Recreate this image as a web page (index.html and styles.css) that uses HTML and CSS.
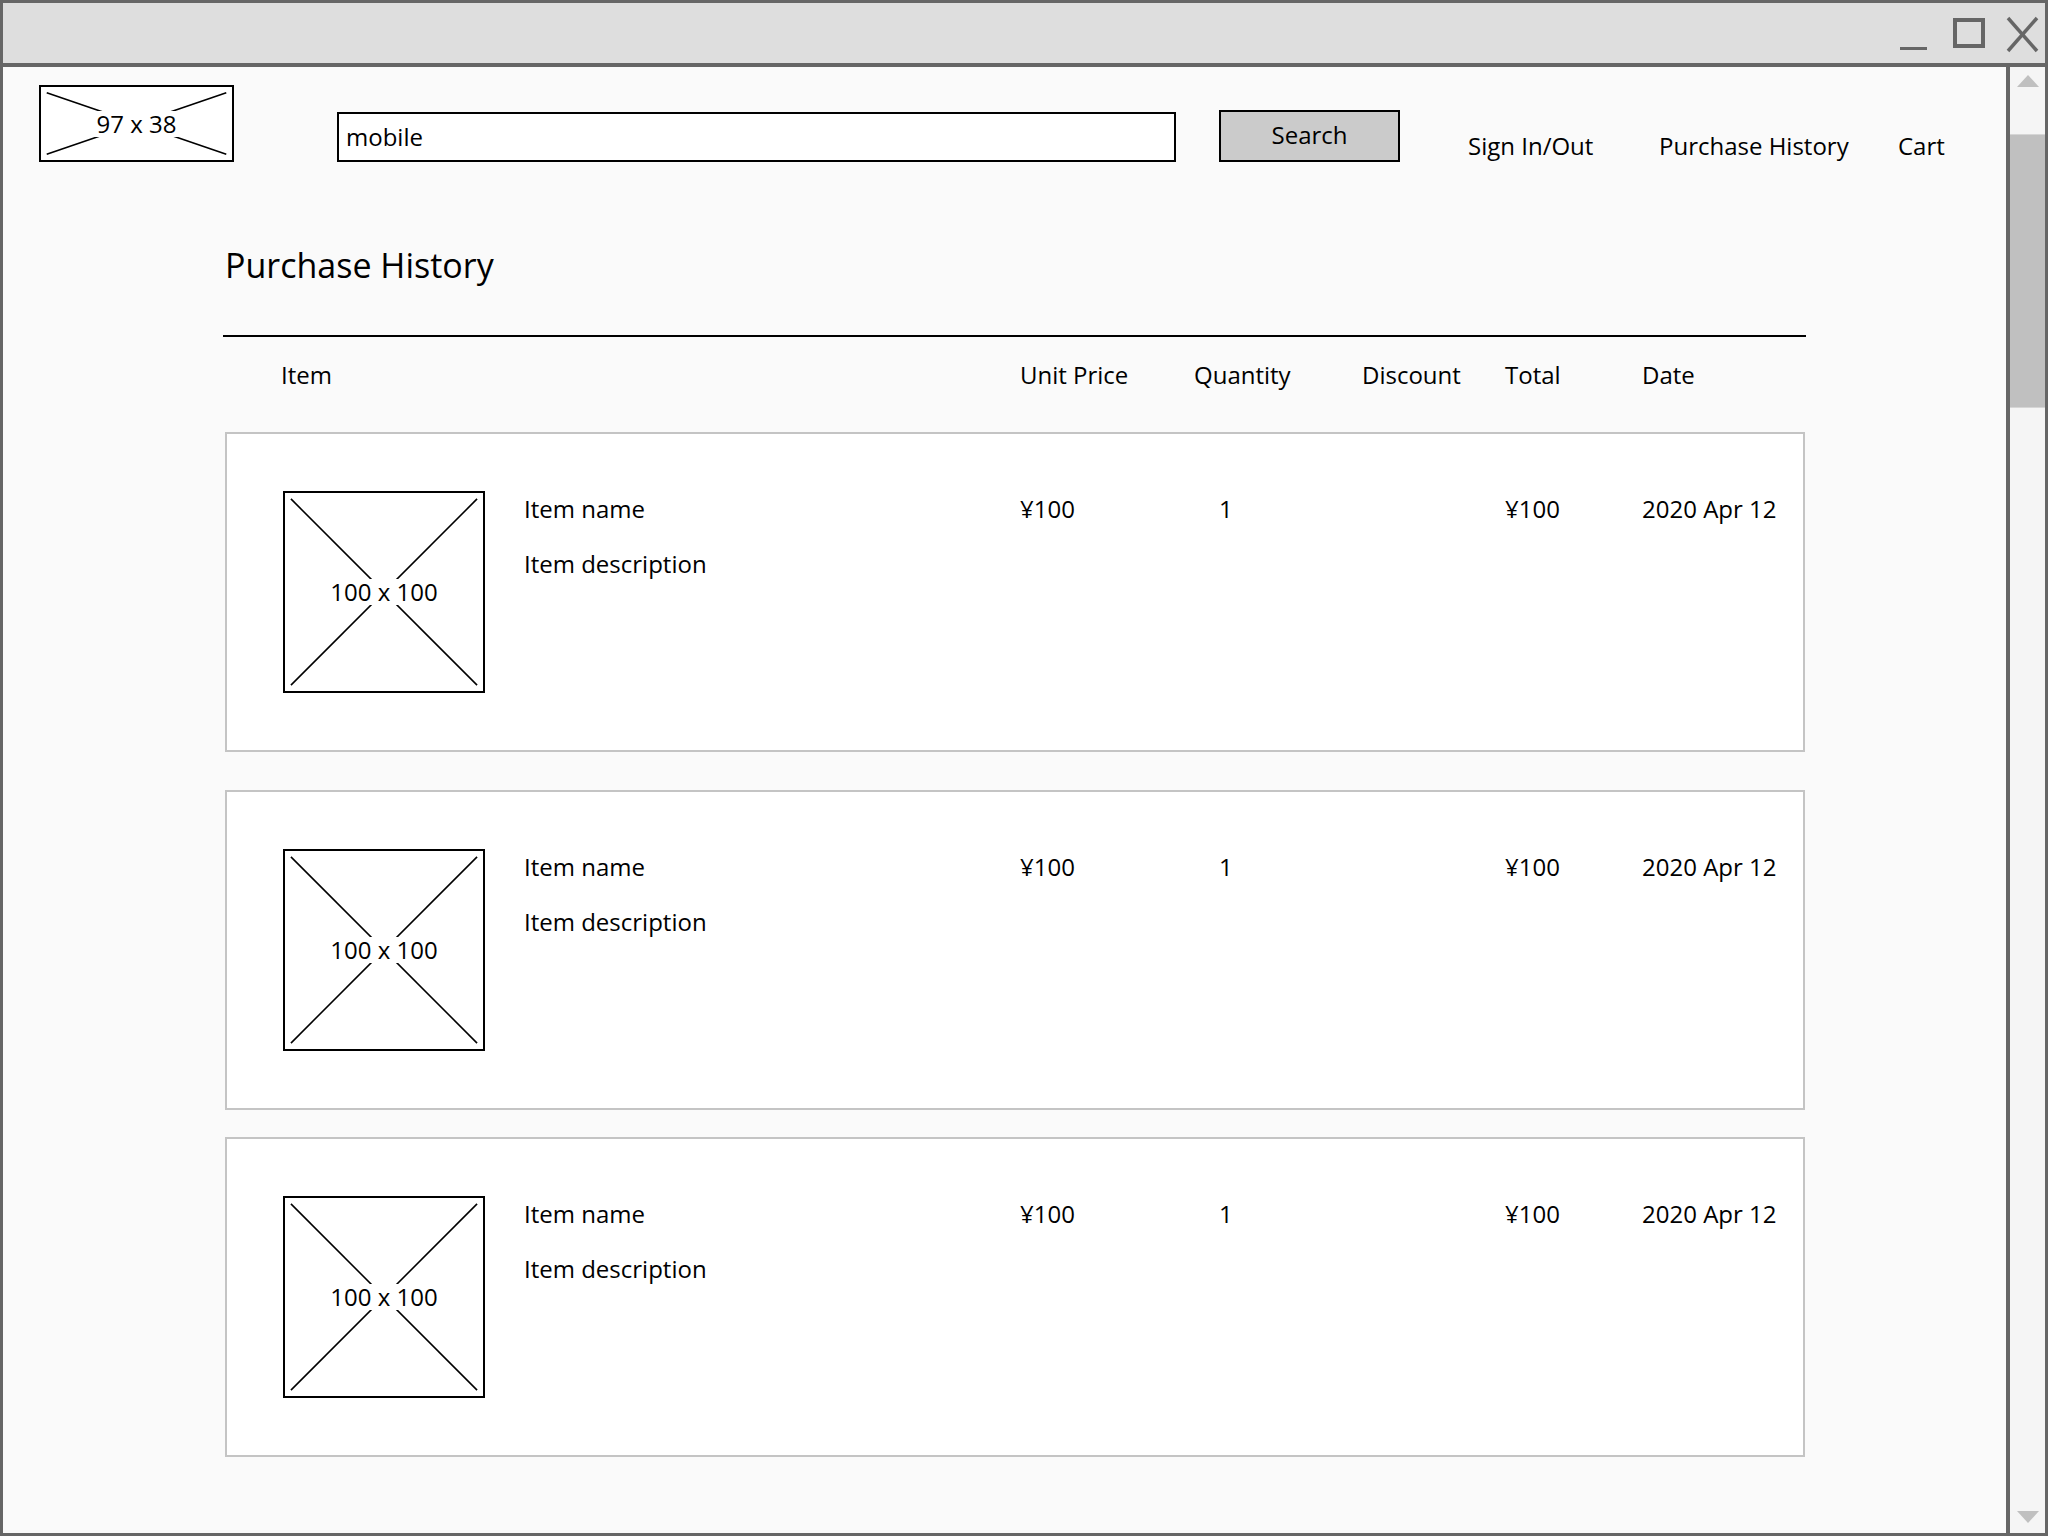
FILE: index.html
```html
<!DOCTYPE html>
<html lang="en">
<head>
<meta charset="utf-8">
<title>Purchase History</title>
<link rel="stylesheet" href="styles.css">
</head>
<body>
<div class="window">
  <div class="titlebar">
    <svg class="controls" width="143" height="50" viewBox="0 0 143 50">
      <line x1="3" y1="38.5" x2="30" y2="38.5" stroke="#666" stroke-width="3"/>
      <rect x="58" y="10" width="28" height="26" fill="none" stroke="#666" stroke-width="4"/>
      <line x1="111" y1="8" x2="140" y2="41" stroke="#666" stroke-width="3.5"/>
      <line x1="140" y1="8" x2="111" y2="41" stroke="#666" stroke-width="3.5"/>
    </svg>
  </div>
  <div class="frame">
    <div class="content">
      <header class="topbar">
        <div class="ph logo">
          <svg class="ph-lines" viewBox="0 0 100 100" preserveAspectRatio="none">
            <line x1="3" y1="8" x2="97" y2="92" vector-effect="non-scaling-stroke"/>
            <line x1="97" y1="8" x2="3" y2="92" vector-effect="non-scaling-stroke"/>
          </svg>
          <span class="ph-label">97 x 38</span>
        </div>
        <div class="search-input">mobile</div>
        <div class="search-btn">Search</div>
        <nav class="nav">
          <span class="nav-link">Sign In/Out</span>
          <span class="nav-link">Purchase History</span>
          <span class="nav-link">Cart</span>
        </nav>
      </header>

      <main class="history">
        <h1 class="title">Purchase History</h1>
        <div class="rule"></div>
        <div class="cols">
          <span>Item</span>
          <span>Unit Price</span>
          <span>Quantity</span>
          <span>Discount</span>
          <span>Total</span>
          <span>Date</span>
        </div>

        <div class="card card-1">
          <div class="ph thumb">
            <svg class="ph-lines" viewBox="0 0 100 100" preserveAspectRatio="none">
              <line x1="3" y1="3" x2="97" y2="97" vector-effect="non-scaling-stroke"/>
              <line x1="97" y1="3" x2="3" y2="97" vector-effect="non-scaling-stroke"/>
            </svg>
            <span class="ph-label">100 x 100</span>
          </div>
          <div class="cell info">
            <div>Item name</div>
            <div class="desc">Item description</div>
          </div>
          <div class="cell">¥100</div>
          <div class="cell">1</div>
          <div class="cell"></div>
          <div class="cell">¥100</div>
          <div class="cell">2020 Apr 12</div>
        </div>

        <div class="card card-2">
          <div class="ph thumb">
            <svg class="ph-lines" viewBox="0 0 100 100" preserveAspectRatio="none">
              <line x1="3" y1="3" x2="97" y2="97" vector-effect="non-scaling-stroke"/>
              <line x1="97" y1="3" x2="3" y2="97" vector-effect="non-scaling-stroke"/>
            </svg>
            <span class="ph-label">100 x 100</span>
          </div>
          <div class="cell info">
            <div>Item name</div>
            <div class="desc">Item description</div>
          </div>
          <div class="cell">¥100</div>
          <div class="cell">1</div>
          <div class="cell"></div>
          <div class="cell">¥100</div>
          <div class="cell">2020 Apr 12</div>
        </div>

        <div class="card card-3">
          <div class="ph thumb">
            <svg class="ph-lines" viewBox="0 0 100 100" preserveAspectRatio="none">
              <line x1="3" y1="3" x2="97" y2="97" vector-effect="non-scaling-stroke"/>
              <line x1="97" y1="3" x2="3" y2="97" vector-effect="non-scaling-stroke"/>
            </svg>
            <span class="ph-label">100 x 100</span>
          </div>
          <div class="cell info">
            <div>Item name</div>
            <div class="desc">Item description</div>
          </div>
          <div class="cell">¥100</div>
          <div class="cell">1</div>
          <div class="cell"></div>
          <div class="cell">¥100</div>
          <div class="cell">2020 Apr 12</div>
        </div>
      </main>
    </div>

    <div class="scrollbar">
      <div class="arrow-up"></div>
      <div class="thumb-bar"></div>
      <div class="arrow-down"></div>
    </div>
  </div>
</div>
</body>
</html>
```

FILE: styles.css
```css
* { box-sizing: border-box; }

html, body {
  margin: 0;
  padding: 0;
}

body {
  background: #fafafa;
  font-family: "Open Sans", "Liberation Sans", sans-serif;
  font-size: 24px;
  line-height: 28px;
  color: #000;
}

.window {
  width: 2048px;
  height: 1536px;
  border: 3px solid #666;
  display: flex;
  flex-direction: column;
  background: #fafafa;
  overflow: hidden;
}

.titlebar {
  height: 64px;
  flex: 0 0 64px;
  background: #dedede;
  border-bottom: 4px solid #666;
  display: flex;
  justify-content: flex-end;
  align-items: flex-start;
  padding-top: 7px;
  padding-right: 5px;
}

.controls { display: block; }

.frame {
  flex: 1;
  display: flex;
  min-height: 0;
}

.content {
  flex: 1;
  min-width: 0;
}

/* top bar */
.topbar {
  display: flex;
  align-items: flex-start;
}

.ph {
  position: relative;
  background: #fff;
  border: 2px solid #000;
  display: flex;
  align-items: center;
  justify-content: center;
}

.ph-lines {
  position: absolute;
  left: 0;
  top: 0;
  width: 100%;
  height: 100%;
}

.ph-lines line {
  stroke: #000;
  stroke-width: 1.6;
}

.ph-label {
  position: relative;
  background: #fff;
  padding: 0 5px;
  line-height: 26px;
}

.logo {
  width: 195px;
  height: 77px;
  margin: 18px 0 0 36px;
}

.search-input {
  width: 839px;
  height: 50px;
  margin: 45px 0 0 103px;
  border: 2px solid #000;
  background: #fff;
  padding: 0 7px;
  display: flex;
  align-items: center;
}

.search-btn {
  width: 181px;
  height: 52px;
  margin: 43px 0 0 43px;
  border: 2px solid #000;
  background: #cbcbcb;
  display: flex;
  align-items: center;
  justify-content: center;
  padding-bottom: 2px;
}

.nav {
  margin: 65px 0 0 68px;
  display: grid;
  grid-template-columns: 191px 239px auto;
}

/* main */
.history {
  margin-left: 220px;
  width: 1583px;
}

.title {
  margin: 83px 0 0 2px;
  font-size: 34px;
  line-height: 40px;
  font-weight: normal;
}

.rule {
  margin-top: 50px;
  height: 2px;
  background: #000;
}

.cols {
  margin-top: 24px;
  padding-left: 58px;
  display: grid;
  grid-template-columns: 739px 174px 168px 143px 137px 1fr;
}

.card {
  margin-left: 2px;
  width: 1580px;
  height: 320px;
  background: #fff;
  border: 2px solid #c4c4c4;
  padding: 57px 0 0 56px;
  display: grid;
  grid-template-columns: 241px 496px 199px 143px 143px 137px 1fr;
  align-items: start;
}

.card-1 { margin-top: 43px; }
.card-2 { margin-top: 38px; }
.card-3 { margin-top: 27px; }

.thumb {
  width: 202px;
  height: 202px;
}

.cell {
  margin-top: 4px;
}

.desc {
  margin-top: 27px;
}

/* scrollbar */
.scrollbar {
  width: 39px;
  flex: 0 0 39px;
  border-left: 4px solid #666;
  background: #f5f5f5;
  display: flex;
  flex-direction: column;
  align-items: center;
}

.arrow-up {
  width: 0;
  height: 0;
  margin-top: 8px;
  border-left: 11px solid transparent;
  border-right: 11px solid transparent;
  border-bottom: 12px solid #c0c0c0;
}

.thumb-bar {
  align-self: stretch;
  margin-top: 47px;
  height: 274px;
  background: #c0c0c0;
  border-top: 1px solid #d6d6d6;
  border-bottom: 1px solid #d6d6d6;
}

.arrow-down {
  width: 0;
  height: 0;
  margin-top: auto;
  margin-bottom: 10px;
  border-left: 11px solid transparent;
  border-right: 11px solid transparent;
  border-top: 12px solid #c0c0c0;
}
```
